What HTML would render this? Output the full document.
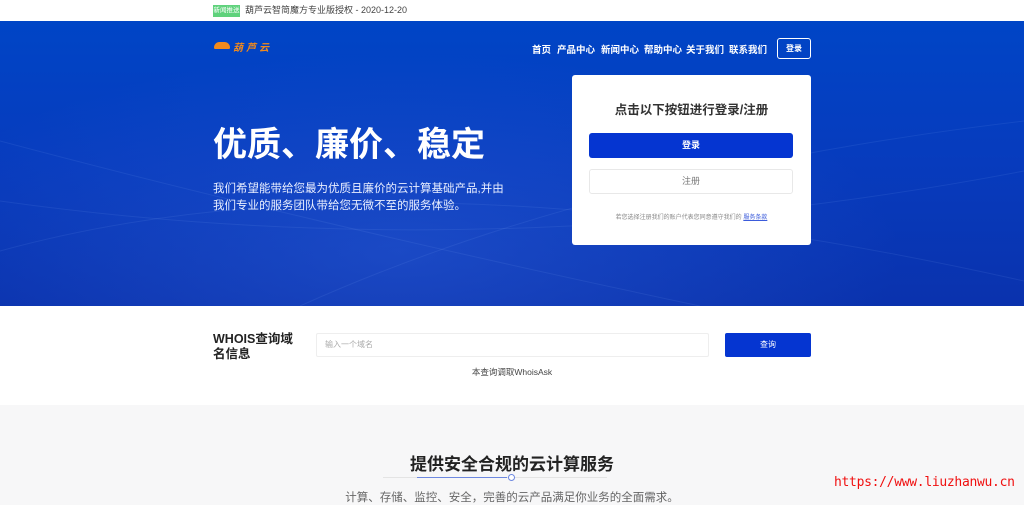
<!DOCTYPE html>
<html><head><meta charset="utf-8"><style>
*{margin:0;padding:0;box-sizing:border-box}
body{width:1024px;height:504px;overflow:hidden;font-family:"Liberation Sans","Noto Sans CJK SC",sans-serif;background:#f7f7f8;position:relative}
.a{position:absolute}
.n{position:absolute;top:42px;font-size:9.5px;color:#fff;font-weight:bold;white-space:nowrap}
</style></head><body>
<div class="a" style="left:0;top:0;width:1024px;height:21px;background:#fff"></div>
<div class="a" style="left:213px;top:5px;width:27px;height:12px;background:#5fd27c;color:#fff;font-size:6.5px;line-height:12px;text-align:center;white-space:nowrap;overflow:hidden">新闻推送</div>
<div class="a" style="left:245px;top:4px;font-size:9px;color:#444;line-height:13px">葫芦云智简魔方专业版授权 - 2020-12-20</div>
<div class="a" style="left:0;top:21px;width:1024px;height:285px;background:radial-gradient(ellipse 500px 200px at 400px 230px,rgba(60,110,230,.35),transparent),linear-gradient(180deg,#0045c6 0%,#073bbd 50%,#0a32ad 100%)"></div>
<svg class="a" style="left:0;top:21px" width="1024" height="285"><g fill="none" stroke="rgba(150,190,255,.1)" stroke-width="1"><path d="M0 230 Q400 120 1024 260"/><path d="M0 180 Q500 250 1024 150"/><path d="M300 285 Q600 150 1024 100"/><path d="M0 120 Q300 200 700 285"/></g></svg>
<div class="a" style="left:214px;top:42px;width:16px;height:7px;background:#f28a1c;border-radius:8px 8px 2px 2px"></div>
<div class="a" style="left:233px;top:39px;font-size:10px;color:#f28a1c;font-weight:bold;letter-spacing:3px;font-style:italic">葫芦云</div>
<div class="n" style="left:532px">首页</div>
<div class="n" style="left:557px">产品中心</div>
<div class="n" style="left:601px">新闻中心</div>
<div class="n" style="left:644px">帮助中心</div>
<div class="n" style="left:686px">关于我们</div>
<div class="n" style="left:729px">联系我们</div>
<div class="a" style="left:777px;top:38px;width:34px;height:21px;border:1px solid #fff;border-radius:3px;color:#fff;font-size:8px;font-weight:bold;text-align:center;line-height:19px">登录</div>
<div class="a" style="left:213px;top:124px;font-size:34px;color:#fff;font-weight:bold;line-height:42px;white-space:nowrap">优质、廉价、稳定</div>
<div class="a" style="left:213px;top:181px;width:300px;font-size:11.5px;color:#e8eeff;line-height:17px">我们希望能带给您最为优质且廉价的云计算基础产品,并由我们专业的服务团队带给您无微不至的服务体验。</div>
<div class="a" style="left:572px;top:75px;width:239px;height:170px;background:#fff;border-radius:3px"></div>
<div class="a" style="left:572px;top:99px;width:239px;text-align:center;font-size:12.5px;font-weight:bold;color:#333">点击以下按钮进行登录/注册</div>
<div class="a" style="left:589px;top:133px;width:204px;height:25px;background:#0535d1;border-radius:3px;color:#fff;font-size:9px;font-weight:bold;text-align:center;line-height:25px">登录</div>
<div class="a" style="left:589px;top:169px;width:204px;height:25px;border:1px solid #e8e8e8;border-radius:3px;color:#777;font-size:9px;text-align:center;line-height:23px">注册</div>
<div class="a" style="left:572px;top:212px;width:239px;text-align:center;font-size:6px;color:#888">若您选择注册我们的账户代表您同意遵守我们的 <span style="color:#3b5bdb;text-decoration:underline">服务条款</span></div>
<div class="a" style="left:0;top:306px;width:1024px;height:99px;background:#fff"></div>
<div class="a" style="left:213px;top:332px;width:90px;font-size:12.5px;font-weight:bold;color:#222;line-height:15px">WHOIS查询域名信息</div>
<div class="a" style="left:316px;top:333px;width:393px;height:24px;border:1px solid #eee;border-radius:2px;font-size:8px;color:#aaa;line-height:22px;padding-left:8px">输入一个域名</div>
<div class="a" style="left:725px;top:333px;width:86px;height:24px;background:#0535d1;border-radius:2px;color:#fff;font-size:8px;text-align:center;line-height:24px">查询</div>
<div class="a" style="left:0;top:366px;width:1024px;text-align:center;font-size:8.5px;color:#444">本查询调取WhoisAsk</div>
<div class="a" style="left:0;top:450px;width:1024px;text-align:center;font-size:17px;font-weight:bold;color:#222">提供安全合规的云计算服务</div>
<div class="a" style="left:383px;top:477px;width:224px;height:1px;background:#e4e4e4"></div>
<div class="a" style="left:417px;top:477px;width:90px;height:1px;background:#6d88e0"></div>
<div class="a" style="left:508px;top:474px;width:7px;height:7px;border:1px solid #6d88e0;border-radius:50%;background:#fff"></div>
<div class="a" style="left:0;top:489px;width:1024px;text-align:center;font-size:11.5px;color:#666">计算、存储、监控、安全，完善的云产品满足你业务的全面需求。</div>
<div class="a" style="left:834px;top:475px;font-size:13px;color:#f01010;font-family:'DejaVu Sans Mono',monospace;letter-spacing:-0.3px">https://www.liuzhanwu.cn</div>
</body></html>
